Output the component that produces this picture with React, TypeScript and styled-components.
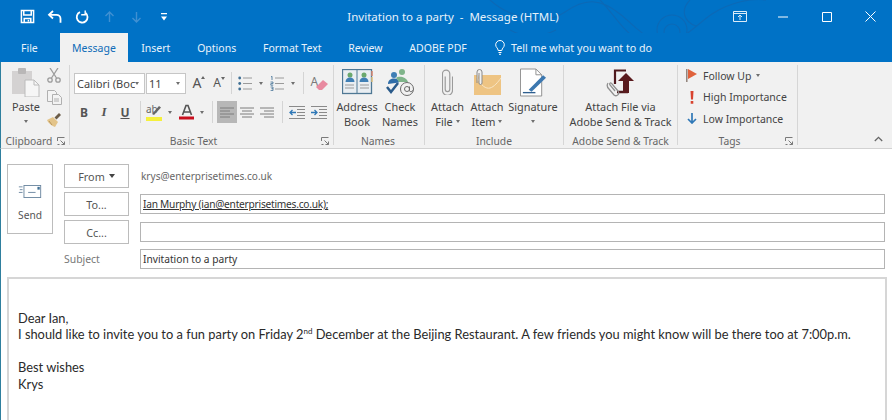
import React from "react"
import styled, { createGlobalStyle } from "styled-components"

const GlobalStyle = createGlobalStyle`
  html, body { margin: 0; padding: 0; background: #fff; }
  body { font-family: "Noto Sans", "Open Sans", sans-serif; color: #444; overflow: hidden; }
  svg { display: block; flex: none; }
`

const Win = styled.div`
  width: 892px;
  height: 420px;
  display: flex;
  flex-direction: column;
  overflow: hidden;
`

const TitleBar = styled.header`
  position: relative;
  height: 33px;
  flex: none;
  background: #0072c6;
  display: grid;
  grid-template-columns: 1fr auto 1fr;
  align-items: center;
  color: #fff;
`

const Swirls = styled.svg`
  position: absolute;
  left: 440px;
  top: 0;
  pointer-events: none;
`

const Qat = styled.div`
  display: flex;
  align-items: center;
  padding-left: 14px;
  position: relative;
`

const QatSlot = styled.div`
  width: 27.2px;
  height: 16px;
  display: flex;
  align-items: center;
  justify-content: center;
`

const TitleText = styled.div`
  font-size: 11.5px;
  position: relative;
  padding-left: 14px;
  white-space: pre;
  color: #e6f1fa;
`

const WinControls = styled.div`
  display: flex;
  justify-content: flex-end;
  position: relative;
`

const WinSlot = styled.div`
  width: 43.5px;
  height: 16px;
  display: flex;
  align-items: center;
  justify-content: center;
`

const TabBar = styled.nav`
  height: 29px;
  flex: none;
  background: #0072c6;
  display: flex;
  padding-left: 7.6px;
  position: relative;
`

const Tab = styled.div<{ $active?: boolean; $gap?: number }>`
  height: 29px;
  padding: 0 ${(p) => (p.$active ? 12 : 13.4)}px;
  margin-right: ${(p) => p.$gap ?? 0}px;
  display: flex;
  align-items: center;
  gap: 5px;
  font-size: 10.5px;
  white-space: nowrap;
  color: ${(p) => (p.$active ? "#0f6cb8" : "#e8f2fb")};
  background: ${(p) => (p.$active ? "#f1f1f1" : "transparent")};
`

const TellMe = styled(Tab)`
  margin-left: 1.5px;
  gap: 6px;
  font-size: 10.7px;
`

const Ribbon = styled.section`
  height: 87px;
  flex: none;
  box-sizing: border-box;
  background: #f1f1f1;
  border-bottom: 1px solid #d2d2d2;
  border-left: 1px solid #2f7f9e;
  display: flex;
  position: relative;
`

const Group = styled.div<{ $w: number }>`
  width: ${(p) => p.$w}px;
  flex: none;
  box-sizing: border-box;
  display: flex;
  flex-direction: column;
  margin: 3px 0;
  border-right: 1px solid #d6d6d6;
  position: relative;
`

const GroupBody = styled.div`
  flex: 1;
  display: flex;
  min-height: 0;
`

const GroupLabel = styled.div<{ $shift?: number }>`
  height: 16px;
  flex: none;
  margin-bottom: -4px;
  padding-right: ${(p) => p.$shift ?? 0}px;
  display: flex;
  align-items: center;
  justify-content: center;
  font-size: 10.3px;
  color: #666;
  position: relative;
`

const Launcher = styled.svg`
  position: absolute;
  right: 4px;
  top: 4px;
`

const BigButton = styled.div<{ $w: number; $ml?: number }>`
  width: ${(p) => p.$w}px;
  margin-left: ${(p) => p.$ml ?? 0}px;
  flex: none;
  display: flex;
  flex-direction: column;
  align-items: center;
  font-size: 10.9px;
  line-height: 15px;
  color: #444;
  text-align: center;
  white-space: nowrap;
`

const BigIcon = styled.div`
  height: 34px;
  padding: 1px 0;
  box-sizing: border-box;
  display: flex;
  align-items: center;
  justify-content: center;
`

const Label = styled.div`
  display: flex;
  align-items: center;
  justify-content: center;
  gap: 3px;
  height: 15px;
`

const Caret = styled.span<{ $big?: boolean }>`
  display: inline-block;
  width: 0;
  height: 0;
  border-left: ${(p) => (p.$big ? 3.5 : 2.5)}px solid transparent;
  border-right: ${(p) => (p.$big ? 3.5 : 2.5)}px solid transparent;
  border-top: ${(p) => (p.$big ? 4 : 3)}px solid ${(p) => (p.$big ? "#444" : "#6f6f6f")};
  flex: none;
`

const SmallColumn = styled.div`
  display: flex;
  flex-direction: column;
  align-items: center;
  gap: 7px;
  width: 14px;
  padding-top: 3px;
`

const TextRows = styled.div`
  display: flex;
  flex-direction: column;
  gap: 7px;
  padding: 7px 0 0 4px;
`

const ToolRow = styled.div`
  height: 22px;
  display: flex;
  align-items: center;
`

const Combo = styled.div<{ $w: number }>`
  width: ${(p) => p.$w}px;
  height: 21px;
  box-sizing: border-box;
  background: #fff;
  border: 1px solid #c6c6c6;
  margin-right: 1px;
  display: flex;
  align-items: center;
  justify-content: space-between;
  padding: 0 5px 0 2px;
  font-size: 11px;
  color: #444;
  white-space: nowrap;
`

const ComboText = styled.span`
  display: block;
  width: 61px;
  height: 15px;
  line-height: 15px;
  overflow: hidden;
`

const Tool = styled.div<{ $w: number; $on?: boolean }>`
  width: ${(p) => p.$w}px;
  height: 22px;
  flex: none;
  display: flex;
  align-items: center;
  justify-content: center;
  background: ${(p) => (p.$on ? "#b7b7b7" : "transparent")};
`

const ItalicGlyph = styled.span`
  font-family: "Liberation Serif", serif;
  font-size: 13px;
  font-weight: 700;
  font-style: italic;
  color: #555;
`

const BoldGlyph = styled.span`
  font-size: 12px;
  font-weight: 700;
  color: #555;
`

const UnderGlyph = styled(BoldGlyph)`
  text-decoration: underline;
`

const SizeGlyph = styled.span<{ $size: number }>`
  position: relative;
  font-size: ${(p) => p.$size}px;
  color: #555;
  line-height: 1;

  &::after {
    content: "";
    position: absolute;
    right: -4px;
    top: 0;
    border-left: 2.5px solid transparent;
    border-right: 2.5px solid transparent;
    border-bottom: 3px solid #666;
  }
`

const ShrinkGlyph = styled(SizeGlyph)`
  &::after {
    border-bottom: 0;
    border-top: 3px solid #666;
  }
`

const Divider = styled.div<{ $l?: number; $r?: number }>`
  width: 1px;
  height: 22px;
  flex: none;
  background: #d4d4d4;
  margin: 0 ${(p) => p.$r ?? 4}px 0 ${(p) => p.$l ?? 4}px;
`

const HighlightWrap = styled.div`
  position: relative;
  width: 16px;
  height: 17px;
  font-size: 10px;
  line-height: 11px;
  color: #666;
`

const HighlightBar = styled.div`
  position: absolute;
  left: 0;
  right: 0;
  bottom: 0;
  height: 4px;
  background: #f5f03c;
`

const HighlightPen = styled.svg`
  position: absolute;
  left: 5px;
  top: 1px;
`

const ClearWrap = styled.div`
  position: relative;
  width: 17px;
  height: 16px;
  font-size: 12px;
  line-height: 14px;
  color: #7a7a7a;
`

const ClearEraser = styled.svg`
  position: absolute;
  right: 0;
  bottom: 0;
`

const TagList = styled.div`
  display: flex;
  flex-direction: column;
  padding: 0 0 0 8px;
`

const TagRow = styled.div`
  height: 21.5px;
  display: flex;
  align-items: center;
  gap: 5px;
  font-size: 10.5px;
  color: #444;
  white-space: nowrap;
`

const TagIcon = styled.div`
  width: 12px;
  display: flex;
  justify-content: center;
`

const Collapse = styled.svg`
  position: absolute;
  right: 9px;
  bottom: 6px;
`

const Compose = styled.main`
  flex: 1;
  min-height: 0;
  background: #fff;
  border-left: 1px solid #2f7f9e;
  display: flex;
  flex-direction: column;
  padding: 15px 0 0 6px;
`

const Head = styled.div`
  display: flex;
  gap: 11px;
  padding-right: 7px;
`

const SendButton = styled.div`
  width: 46px;
  height: 70px;
  box-sizing: border-box;
  flex: none;
  border: 1px solid #bcbcbc;
  display: flex;
  flex-direction: column;
  align-items: center;
  gap: 10px;
  padding-top: 20px;
  font-size: 10.2px;
  line-height: 14px;
  color: #555;
`

const Fields = styled.div`
  flex: 1;
  display: flex;
  flex-direction: column;
  gap: 4px;
`

const FieldRow = styled.div<{ $h: number }>`
  height: ${(p) => p.$h}px;
  display: flex;
  align-items: center;
  gap: 11px;
`

const AddrButton = styled.div`
  width: 65px;
  height: 24px;
  box-sizing: border-box;
  flex: none;
  border: 1px solid #bcbcbc;
  display: flex;
  align-items: center;
  justify-content: center;
  gap: 4px;
  font-size: 10.8px;
  color: #555;
`

const SubjectLabel = styled.div`
  width: 65px;
  flex: none;
  font-size: 10.4px;
  color: #777;
`

const FromValue = styled.div`
  font-size: 10.05px;
  color: #666;
  padding-left: 1px;
`

const Input = styled.div`
  flex: 1;
  height: 20px;
  box-sizing: border-box;
  border: 1px solid #b4b4b4;
  display: flex;
  align-items: center;
  padding-left: 2px;
  font-size: 10.2px;
  color: #333;
`

const Recipient = styled.span`
  text-decoration: underline;
  letter-spacing: -0.25px;
`

const Body = styled.article`
  flex: 1;
  margin: 7px 5px 0 0;
  border: 2px solid #d6d6d6;
  border-bottom: 0;
  padding: 30.5px 0 0 9px;
  font-family: "Lato", "Carlito", sans-serif;
  font-size: 12.85px;
  line-height: 16.6px;
  color: #2a2a2a;
`

const BodyLine = styled.p`
  margin: 0;
  min-height: 16.6px;
  white-space: nowrap;
`

const Ordinal = styled.sup`
  font-size: 8px;
  line-height: 0;
`

const Save = () => (
  <svg width="15" height="15" viewBox="0 0 16 16" fill="none" stroke="#fff" strokeWidth="1.6">
    <path d="M1.5 1.5h13v13h-13z" />
    <path d="M4 1.5v5h8v-5M4.5 14.5v-4.5h7v4.5" />
    <path d="M9 11.5v2" />
  </svg>
)

const Undo = () => (
  <svg width="16" height="14" viewBox="0 0 16 14" fill="none" stroke="#fff" strokeWidth="1.8">
    <path d="M6 1L2 4.8l4 3.7" />
    <path d="M2 4.8h7.5a4 4 0 0 1 4 4v4" />
  </svg>
)

const Redo = () => (
  <svg width="14" height="14" viewBox="0 0 14 14" fill="none" stroke="#fff" strokeWidth="1.8">
    <path d="M5 2.2a5.4 5.4 0 1 0 5.6.8" />
    <path d="M10.2 .5v4.2H6.2" strokeWidth="1.4" />
  </svg>
)

const Arrow = ({ down }: { down?: boolean }) => (
  <svg width="11" height="12" viewBox="0 0 11 12" fill="none" stroke="#3f90d2" strokeWidth="1.4">
    <path d={down ? "M5.5 1v10M1.5 7l4 4 4-4" : "M5.5 11V1M1.5 5l4-4 4 4"} />
  </svg>
)

const QatMore = () => (
  <svg width="6" height="8" viewBox="0 0 6 8" fill="#fff">
    <path d="M0 0h6v1.200H0zM0 3.500h6L3 7.500z" />
  </svg>
)

const RibbonDisplay = () => (
  <svg width="14" height="12" viewBox="0 0 14 12" fill="none" stroke="#dcecf8" strokeWidth="1">
    <path d="M.5 .5h13v10h-13zM.5 2.500h13" />
    <path d="M7 9V4.200M5 6l2-2 2 2" />
  </svg>
)

const Minimize = () => (
  <svg width="10" height="2" viewBox="0 0 10 2" stroke="#fff"><path d="M0 1h10" /></svg>
)

const Maximize = () => (
  <svg width="10" height="10" viewBox="0 0 10 10" fill="none" stroke="#fff"><path d="M.5 .5h9v9h-9z" /></svg>
)

const Close = () => (
  <svg width="11" height="11" viewBox="0 0 11 11" fill="none" stroke="#fff"><path d="M.5 .5l10 10M10.500 .5l-10 10" /></svg>
)

const Bulb = () => (
  <svg width="10" height="15" viewBox="0 0 10 15" fill="none" stroke="#fff" strokeWidth="1">
    <path d="M3.200 10.500C3 8 .7 7.500 .7 4.800a4.300 4.300 0 0 1 8.600 0C9.300 7.500 7 8 6.800 10.500z" />
    <path d="M3.500 12.500h3M4 14.300h2" />
  </svg>
)

const PasteIcon = () => (
  <svg width="28" height="30" viewBox="0 0 28 30">
    <rect x="0" y="4" width="20" height="23" fill="#d4d2d2" />
    <rect x="6" y="1" width="8" height="6" rx="1" fill="#b9b7b7" />
    <path d="M13 13h9l5 5v12H13z" fill="#f6f6f6" stroke="#bcbcbc" />
    <path d="M22 13v5h5" fill="none" stroke="#bcbcbc" />
  </svg>
)

const ScissorsIcon = () => (
  <svg width="14" height="15" viewBox="0 0 14 15" fill="none" stroke="#9c9c9c" strokeWidth="1.300">
    <circle cx="3" cy="12" r="2.200" />
    <circle cx="11" cy="12" r="2.200" />
    <path d="M4.500 10L11 0M9.500 10L3 0" />
  </svg>
)

const CopyIcon = () => (
  <svg width="15" height="15" viewBox="0 0 15 15" fill="#f3f3f3" stroke="#b0b0b0">
    <path d="M.5 .5h7l2 2v9h-9z" />
    <path d="M5.500 4.500h6l3 3v7h-9z" />
    <path d="M7 9h5M7 11h5" fill="none" />
  </svg>
)

const PainterIcon = () => (
  <svg width="16" height="15" viewBox="0 0 16 15">
    <path d="M1 8l6-3 5 5-3 5C6 14 2 11 1 8z" fill="#e3c48a" />
    <path d="M8.500 5.500L13 1l2 2-4.500 4.500z" fill="#6b5c48" />
    <path d="M3 9l3 4" stroke="#b9975e" />
  </svg>
)

const Bullets = () => (
  <svg width="14" height="15" viewBox="0 0 14 15" fill="none">
    <g fill="#3f6f94"><circle cx="1.700" cy="2" r="1.400" /><circle cx="1.700" cy="7.500" r="1.400" /><circle cx="1.700" cy="13" r="1.400" /></g>
    <path d="M5 2h9M5 7.500h9M5 13h9" stroke="#9a9a9a" />
  </svg>
)

const Numbers = () => (
  <svg width="14" height="15" viewBox="0 0 14 15" fill="none">
    <path d="M1 1l1-.7v3.700M.5 6h2.500v1.600H.8v1.600h2.400M.6 11H3v3.600H.6M1.400 12.700H3" stroke="#3f6f94" strokeWidth=".8" />
    <path d="M5 2h9M5 7.500h9M5 13h9" stroke="#9a9a9a" />
  </svg>
)

const ClearFormat = () => (
  <ClearWrap>
    A
    <ClearEraser width="12" height="11" viewBox="0 0 12 11">
      <path d="M0 7l7-7 5 4-6 6H3z" fill="#e88aa0" />
    </ClearEraser>
  </ClearWrap>
)

const Highlight = () => (
  <HighlightWrap>
    ab
    <HighlightPen width="11" height="11" viewBox="0 0 11 11">
      <path d="M1 9L8 1l2 1.500L3 10z" fill="#666" />
    </HighlightPen>
    <HighlightBar />
  </HighlightWrap>
)

const FontColor = () => (
  <svg width="16" height="16" viewBox="0 0 16 16">
    <path d="M3.500 11L7 1.500h2L12.500 11M5 8h6" fill="none" stroke="#555" strokeWidth="1.600" />
    <rect x="0" y="12.500" width="15" height="3" fill="#c80f1e" />
  </svg>
)

const Align = ({ kind }: { kind: "l" | "c" | "r" }) => {
  const rows = kind === "l"
    ? "M1 2h14M1 5h10M1 8h14M1 11h10"
    : kind === "c"
      ? "M1 2h14M3 5h10M1 8h14M3 11h10"
      : "M1 2h14M5 5h10M1 8h14M5 11h10"
  return (
    <svg width="16" height="13" viewBox="0 0 16 13" fill="none" stroke="#7c7c7c">
      <path d={rows} />
    </svg>
  )
}

const Indent = ({ out }: { out?: boolean }) => (
  <svg width="16" height="13" viewBox="0 0 16 13" fill="none">
    <path d="M0 .5h16M8 3.500h8M8 6.500h8M8 9.500h8M0 12.500h16" stroke="#8a8a8a" />
    <path d={out ? "M7 6.500H1M3.500 4L1 6.500 3.500 9" : "M0 6.500h6M3.500 4L6 6.500 3.500 9"} stroke="#2f78b7" strokeWidth="1.300" />
  </svg>
)

const AddressBookIcon = () => (
  <svg width="31" height="26" viewBox="0 0 31 26">
    <rect x=".5" y=".5" width="29" height="24" fill="#e9eef2" stroke="#4f7894" strokeWidth="1.300" />
    <path d="M15 .5v24" stroke="#4f7894" />
    <circle cx="8" cy="6" r="2.500" fill="#6aa86f" />
    <path d="M3.500 13c0-3 2-4.500 4.500-4.500s4.500 1.500 4.500 4.500z" fill="#3f7fb5" />
    <circle cx="22" cy="6" r="2.500" fill="#6aa86f" />
    <path d="M17.500 13c0-3 2-4.500 4.500-4.500s4.500 1.500 4.500 4.500z" fill="#3f7fb5" />
    <path d="M3 16h9M3 19h9M18 16h9M18 19h9" stroke="#9a9a9a" />
    <path d="M30 2v5" stroke="#d9866f" strokeWidth="1.500" />
    <path d="M30 8v5" stroke="#e2c27c" strokeWidth="1.500" />
  </svg>
)

const CheckNamesIcon = () => (
  <svg width="30" height="27" viewBox="0 0 30 27" fill="none">
    <circle cx="9" cy="6" r="3" fill="#3f7fb5" />
    <path d="M3 15c0-4 3-5.500 6-5.500s5 1.500 5 4z" fill="#2f6da8" />
    <circle cx="17" cy="3" r="3" fill="#7fb48a" />
    <path d="M11 9c2-2 10-2 12 4h-9z" fill="#7fb48a" />
    <path d="M2 18l4 5 7-9" stroke="#2a5a8a" strokeWidth="2.500" />
    <circle cx="22" cy="20" r="6.500" stroke="#6a6a6a" />
    <circle cx="22" cy="20" r="2.500" stroke="#6a6a6a" />
    <path d="M24.500 17.500v4c0 1.500 2 1.500 3.500 0" stroke="#6a6a6a" />
  </svg>
)

const ClipIcon = () => (
  <svg width="11" height="26" viewBox="0 0 12 28" fill="none" stroke="#9b9b9b" strokeWidth="1.300">
    <path d="M3.500 8v14a2.500 2.500 0 0 0 5 0V5a4 4 0 0 0-8 0v18a5.500 5.500 0 0 0 11 0V8" />
  </svg>
)

const AttachItemIcon = () => (
  <svg width="27" height="27" viewBox="0 0 27 27">
    <rect x="0" y="6" width="27" height="20" fill="#eec483" />
    <path d="M3 8c4 9 9 12 13 11s8-6 11-10" fill="none" stroke="#f9e6c6" strokeWidth="1" />
    <path d="M3 14V3a2.500 2.500 0 0 1 5 0v11a1.500 1.500 0 0 1-3 0V4" fill="#f1f1f1" stroke="#8a8a8a" />
  </svg>
)

const SignatureIcon = () => (
  <svg width="27" height="29" viewBox="0 0 28 29" fill="none">
    <path d="M.5 .5h16l6 6v22H.5z" fill="#fff" stroke="#8f8f8f" />
    <path d="M16.500 .5v6h6" stroke="#8f8f8f" />
    <path d="M9 22L24 7l3 2.500-15 14.500z" fill="#3c78b0" />
    <path d="M3 25h13" stroke="#2f5f8f" strokeWidth="1.400" />
  </svg>
)

const AdobeSendIcon = () => (
  <svg width="29" height="29" viewBox="0 0 29 29" fill="none">
    <path d="M20 2.500H9V16" stroke="#4f1a1e" strokeWidth="2.200" />
    <path d="M11 24h11" stroke="#4f1a1e" strokeWidth="2.500" />
    <path d="M20 5l8 8h-5v12h-6V13h-5z" fill="#5a1b1e" />
    <path d="M2 15C0 18 2 20 3 21l5 6c3 2 6-1 4-4l-6-7c-1-2-3-1-2 1l5 6" stroke="#8f8f8f" strokeWidth="1.300" />
  </svg>
)

const FlagIcon = () => (
  <svg width="12" height="13" viewBox="0 0 12 13">
    <path d="M.8 0v13" stroke="#8a7a72" strokeWidth="1.400" />
    <path d="M2 0l9 5-9 5z" fill="#e0623c" />
  </svg>
)

const Bang = () => (
  <svg width="4" height="13" viewBox="0 0 4 13" fill="#d8432f">
    <path d="M.5 0h3l-.5 8.500H1zM.7 10h2.600v2.800H.7z" />
  </svg>
)

const LowArrow = () => (
  <svg width="10" height="11" viewBox="0 0 10 11" fill="none" stroke="#2f78b7" strokeWidth="1.700">
    <path d="M5 0v10M1 6l4 4 4-4" />
  </svg>
)

const LauncherGlyph = () => (
  <Launcher width="8" height="8" viewBox="0 0 8 8" fill="none" stroke="#7a7a7a">
    <path d="M.5 4V.5h7M.5 7.500h2" />
    <path d="M3.500 3.500l4 4M4.500 7.500h3v-3" />
  </Launcher>
)

const Envelope = () => (
  <svg width="24" height="13" viewBox="0 0 24 14" fill="none">
    <rect x="5.500" y=".5" width="18" height="13" fill="#fff" stroke="#6c87a0" />
    <path d="M0 2h4M1 5h3M0 8h4" stroke="#6c87a0" />
    <path d="M10 8h8" stroke="#6c87a0" />
    <rect x="20" y="2" width="2.500" height="3" fill="#3f6f94" />
  </svg>
)

const TitleSwirls = () => (
  <Swirls width="340" height="62" viewBox="0 0 340 62" fill="none" stroke="#0c69b6" strokeWidth="1.100">
    <path d="M50 0c20 18 55 26 75 12S160-2 180 14s30 34 60 26" />
    <path d="M100 62c10-22 40-34 64-24s32 24 24 32" />
    <circle cx="232" cy="30" r="15" />
    <circle cx="232" cy="32" r="8" />
    <path d="M160 0c18 18 26 40 52 44s42-18 60-30 40-16 54-14" />
    <path d="M270 62c12-18 28-28 60-22" />
    <path d="M70 30c14 8 30 8 46 0" />
    <path d="M250 0c-10 10-6 22 6 26" />
  </Swirls>
)

export default function App() {
  return (
    <Win>
      <GlobalStyle />
      <TitleBar>
        <TitleSwirls />
        <Qat>
          <QatSlot><Save /></QatSlot>
          <QatSlot><Undo /></QatSlot>
          <QatSlot><Redo /></QatSlot>
          <QatSlot><Arrow /></QatSlot>
          <QatSlot><Arrow down /></QatSlot>
          <QatSlot><QatMore /></QatSlot>
        </Qat>
        <TitleText>Invitation to a party  -  Message (HTML)</TitleText>
        <WinControls>
          <WinSlot><RibbonDisplay /></WinSlot>
          <WinSlot><Minimize /></WinSlot>
          <WinSlot><Maximize /></WinSlot>
          <WinSlot><Close /></WinSlot>
        </WinControls>
      </TitleBar>

      <TabBar>
        <Tab $gap={8.9}>File</Tab>
        <Tab $active>Message</Tab>
        <Tab>Insert</Tab>
        <Tab>Options</Tab>
        <Tab>Format Text</Tab>
        <Tab>Review</Tab>
        <Tab>ADOBE PDF</Tab>
        <TellMe><Bulb />Tell me what you want to do</TellMe>
      </TabBar>

      <Ribbon>
        <Group $w={69}>
          <GroupBody>
            <BigButton $w={42} $ml={4}>
              <BigIcon><PasteIcon /></BigIcon>
              <Label>Paste</Label>
              <Label><Caret /></Label>
            </BigButton>
            <SmallColumn>
              <ScissorsIcon />
              <CopyIcon />
              <PainterIcon />
            </SmallColumn>
          </GroupBody>
          <GroupLabel $shift={12}>Clipboard<LauncherGlyph /></GroupLabel>
        </Group>

        <Group $w={264}>
          <GroupBody>
            <TextRows>
              <ToolRow>
                <Combo $w={71}><ComboText>Calibri (Boc</ComboText><Caret /></Combo>
                <Combo $w={40}>11<Caret /></Combo>
                <Tool $w={20}><SizeGlyph $size={14}>A</SizeGlyph></Tool>
                <Tool $w={20}><ShrinkGlyph $size={12}>A</ShrinkGlyph></Tool>
                <Divider $r={3} />
                <Tool $w={20}><Bullets /></Tool>
                <Tool $w={12}><Caret /></Tool>
                <Tool $w={20}><Numbers /></Tool>
                <Tool $w={12}><Caret /></Tool>
                <Divider />
                <Tool $w={22}><ClearFormat /></Tool>
              </ToolRow>
              <ToolRow>
                <Tool $w={20}><BoldGlyph>B</BoldGlyph></Tool>
                <Tool $w={20}><ItalicGlyph>I</ItalicGlyph></Tool>
                <Tool $w={22}><UnderGlyph>U</UnderGlyph></Tool>
                <Divider />
                <Tool $w={18}><Highlight /></Tool>
                <Tool $w={14}><Caret /></Tool>
                <Tool $w={20}><FontColor /></Tool>
                <Tool $w={10}><Caret /></Tool>
                <Divider $l={5} $r={4} />
                <Tool $w={20} $on><Align kind="l" /></Tool>
                <Tool $w={20}><Align kind="c" /></Tool>
                <Tool $w={20}><Align kind="r" /></Tool>
                <Divider $l={5} $r={3} />
                <Tool $w={22}><Indent out /></Tool>
                <Tool $w={22}><Indent /></Tool>
              </ToolRow>
            </TextRows>
          </GroupBody>
          <GroupLabel $shift={16}>Basic Text<LauncherGlyph /></GroupLabel>
        </Group>

        <Group $w={91}>
          <GroupBody>
            <BigButton $w={46}>
              <BigIcon><AddressBookIcon /></BigIcon>
              <Label>Address</Label>
              <Label>Book</Label>
            </BigButton>
            <BigButton $w={40}>
              <BigIcon><CheckNamesIcon /></BigIcon>
              <Label>Check</Label>
              <Label>Names</Label>
            </BigButton>
          </GroupBody>
          <GroupLabel $shift={2}>Names</GroupLabel>
        </Group>

        <Group $w={139}>
          <GroupBody>
            <BigButton $w={45}>
              <BigIcon><ClipIcon /></BigIcon>
              <Label>Attach</Label>
              <Label>File<Caret /></Label>
            </BigButton>
            <BigButton $w={34}>
              <BigIcon><AttachItemIcon /></BigIcon>
              <Label>Attach</Label>
              <Label>Item<Caret /></Label>
            </BigButton>
            <BigButton $w={58}>
              <BigIcon><SignatureIcon /></BigIcon>
              <Label>Signature</Label>
              <Label><Caret /></Label>
            </BigButton>
          </GroupBody>
          <GroupLabel>Include</GroupLabel>
        </Group>

        <Group $w={114}>
          <GroupBody>
            <BigButton $w={113}>
              <BigIcon><AdobeSendIcon /></BigIcon>
              <Label>Attach File via</Label>
              <Label>Adobe Send &amp; Track</Label>
            </BigButton>
          </GroupBody>
          <GroupLabel>Adobe Send &amp; Track</GroupLabel>
        </Group>

        <Group $w={120}>
          <GroupBody>
            <TagList>
              <TagRow><TagIcon><FlagIcon /></TagIcon>Follow Up<Caret /></TagRow>
              <TagRow><TagIcon><Bang /></TagIcon>High Importance</TagRow>
              <TagRow><TagIcon><LowArrow /></TagIcon>Low Importance</TagRow>
            </TagList>
          </GroupBody>
          <GroupLabel $shift={16}>Tags<LauncherGlyph /></GroupLabel>
        </Group>

        <Collapse width="9" height="6" viewBox="0 0 9 6" fill="none" stroke="#666" strokeWidth="1.300">
          <path d="M.8 5l3.700-3.700L8.200 5" />
        </Collapse>
      </Ribbon>

      <Compose>
        <Head>
          <SendButton>
            <Envelope />
            Send
          </SendButton>
          <Fields>
            <FieldRow $h={24}>
              <AddrButton>From<Caret $big /></AddrButton>
              <FromValue>krys@enterprisetimes.co.uk</FromValue>
            </FieldRow>
            <FieldRow $h={24}>
              <AddrButton>To...</AddrButton>
              <Input><Recipient>Ian Murphy (ian@enterprisetimes.co.uk);</Recipient></Input>
            </FieldRow>
            <FieldRow $h={24}>
              <AddrButton>Cc...</AddrButton>
              <Input />
            </FieldRow>
            <FieldRow $h={22}>
              <SubjectLabel>Subject</SubjectLabel>
              <Input>Invitation to a party</Input>
            </FieldRow>
          </Fields>
        </Head>
        <Body>
          <BodyLine>Dear Ian,</BodyLine>
          <BodyLine>
            I should like to invite you to a fun party on Friday 2<Ordinal>nd</Ordinal> December at the Beijing Restaurant. A few friends you might know will be there too at 7:00p.m.
          </BodyLine>
          <BodyLine />
          <BodyLine>Best wishes</BodyLine>
          <BodyLine>Krys</BodyLine>
        </Body>
      </Compose>
    </Win>
  )
}
